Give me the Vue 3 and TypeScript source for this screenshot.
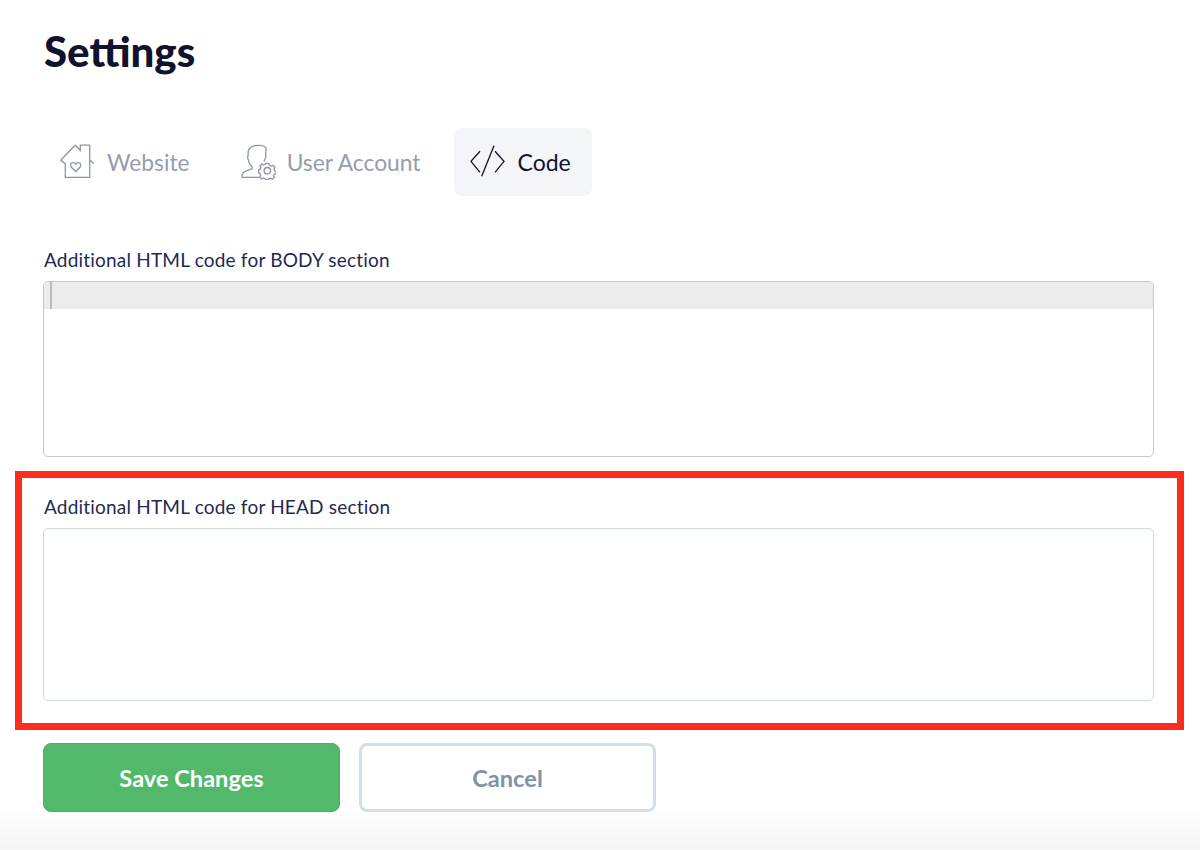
<script setup lang="ts">
const title: string = 'Settings'
</script>

<template>
  <main class="page">
    <h1 class="title">{{ title }}</h1>

    <nav class="tabs">
      <div class="tab">
        <svg class="icon" viewBox="0 0 36 36" fill="none" stroke="currentColor" stroke-width="1.3">
          <path d="M2 15.8 16.3 1.2 21.3 6.3V1.2H30.7V15.8L34.7 19.6 M2 15.8 1.7 16.3 6.3 19.6V33.4H30.7V15.8" />
          <path d="M16.7 27.5 12.2 23C10.6 20.8 12.2 18.4 14.4 18.6 15.4 18.7 16.2 19.2 16.7 20.1 17.2 19.2 18 18.7 19 18.6 21.2 18.4 22.8 20.8 21.2 23Z" />
        </svg>
        <span>Website</span>
      </div>
      <div class="tab tab-user">
        <svg class="icon" viewBox="0 0 36 36" fill="none" stroke="currentColor" stroke-width="1.3">
          <path d="M19.3 33.4H2V31.5C2 28.8 4 27.6 7 26.6L12 24.8V22.5C9.5 20.8 8.6 18.5 8.6 16.2 7.5 14.5 7 13 8.2 11.4 7.8 8.6 8 4.5 12 2.6 16 .5 24.5 1 26 4.2 26.6 6.2 25.4 7.8 25.6 9.8 25.8 11.5 26.3 13 25.2 14.6L24 17.5" />
          <circle cx="27.3" cy="26.7" r="3.2" />
          <path d="M25.8 19.4H28.8L29.4 21.4 31 22.1 32.9 21.2 35 23.2 34 25.1 34.7 26.7 36 27.4V29.2L34.3 30.1 33.6 31.7 34.4 33.4 32.2 35.2 30.5 34.2 28.9 34.9 28.2 35.8H25.6L25 34.6 23.6 34.1 21.8 34.9 19.8 33 20.6 31.2 20 29.6 18.6 28.8V26L20.2 25.2 20.8 23.6 20 22 22 20 23.8 20.8 25.2 20.2Z" />
        </svg>
        <span>User Account</span>
      </div>
      <div class="tab active">
        <svg class="icon" viewBox="0 0 36 36" fill="none" stroke="currentColor" stroke-width="1.3">
          <path d="M10 7.3 1 17.3 10 28.3" />
          <path d="M24 1.7 11.7 32.3" />
          <path d="M25 7.3 34 17.3 25 28.3" />
        </svg>
        <span>Code</span>
      </div>
    </nav>

    <section class="field body-field">
      <label class="label">Additional HTML code for BODY section</label>
      <div class="editor">
        <div class="editor-line"><span class="cursor"></span></div>
      </div>
    </section>

    <section class="highlight">
      <label class="label" for="head-code">Additional HTML code for HEAD section</label>
      <textarea id="head-code" class="head-input"></textarea>
    </section>

    <div class="actions">
      <button class="btn save" type="button">Save Changes</button>
      <button class="btn cancel" type="button">Cancel</button>
    </div>
  </main>
</template>

<style scoped>
.page {
  box-sizing: border-box;
  height: 850px;
  padding: 0 0 0 43px;
  font-family: Lato, "Liberation Sans", sans-serif;
  overflow: hidden;
}
.title {
  margin: 0;
  padding: 29px 0 0 1px;
  height: 128px;
  box-sizing: border-box;
  font-size: 42px;
  line-height: 45px;
  font-weight: 900;
  color: #11122e;
}
.tabs {
  display: flex;
  gap: 18px;
  height: 68px;
}
.tab {
  display: flex;
  align-items: center;
  gap: 12px;
  padding: 0 16px;
  border-radius: 8px;
  font-size: 22.8px;
  color: #959dae;
}
.tab .icon {
  color: #8a95aa;
}
.tab-user {
  gap: 11px;
  padding-right: 15px;
}
.tab.active {
  padding-right: 21px;
  font-size: 23px;
  background: #f4f5f8;
  color: #0f1330;
}
.tab.active .icon {
  color: #0f1330;
}
.icon {
  width: 36px;
  height: 36px;
  flex: none;
}
.body-field {
  padding-top: 51px;
  width: 1111px;
}
.label {
  display: block;
  height: 34px;
  padding-left: 1px;
  font-size: 19px;
  letter-spacing: 0.2px;
  line-height: 26px;
  color: #1e2a52;
}
.editor {
  box-sizing: border-box;
  height: 176px;
  border: 1px solid #c8c8c8;
  border-radius: 5px;
  overflow: hidden;
}
.editor-line {
  height: 27px;
  padding-left: 6px;
  background: #ececec;
}
.cursor {
  display: block;
  width: 2px;
  height: 27px;
  background: #bbbbbb;
}
.highlight {
  box-sizing: border-box;
  width: 1169px;
  height: 259px;
  margin: 14px 0 0 -28px;
  padding: 16px 0 0 21px;
  border: 7px solid #ff2d20;
}
.head-input {
  display: block;
  box-sizing: border-box;
  width: 1111px;
  height: 173px;
  margin: 0;
  border: 1px solid #cdd8e6;
  border-radius: 5px;
  background: #fff;
  resize: none;
  outline: none;
}
.actions {
  display: flex;
  gap: 19px;
  margin-top: 13px;
}
.btn {
  box-sizing: border-box;
  width: 297px;
  height: 69px;
  border-radius: 8px;
  font-family: inherit;
  font-size: 23.6px;
  font-weight: 700;
}
.save {
  border: 1px solid #4cb165;
  background: #52b86a;
  color: #fff;
}
.cancel {
  border: 3px solid #d3deea;
  background: #fff;
  color: #8192a6;
}
</style>

<style>
html,
body {
  margin: 0;
  background: linear-gradient(to bottom, #ffffff 0, #ffffff 805px, #f5f5f5 850px);
  background-repeat: no-repeat;
}
</style>
